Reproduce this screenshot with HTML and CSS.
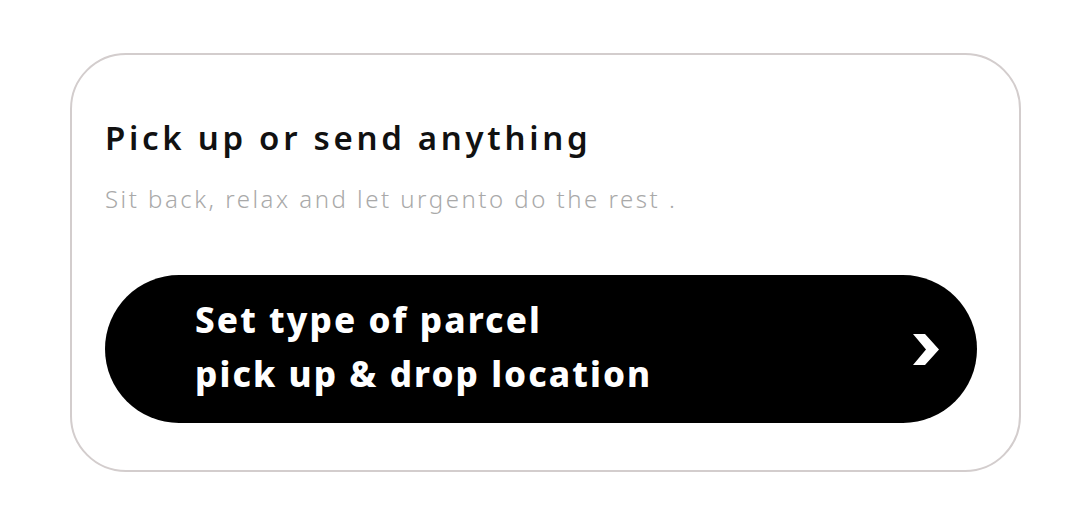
FILE: index.html
```html
<!DOCTYPE html>
<html>
<head>
<meta charset="utf-8">
<link rel="stylesheet" href="styles.css">
</head>
<body>
<div class="card">
  <h1 class="title">Pick up or send anything</h1>
  <p class="subtitle">Sit back, relax and let urgento do the rest .</p>
  <button class="cta">
    <span class="cta-text">Set type of parcel<br>pick up &amp; drop location</span>
    <svg class="chev" width="28" height="32" viewBox="0 0 28 32"><path d="M1 1 L13 1 L27 16.5 L13 32 L1 32 L14 16.5 Z" fill="#fff"/></svg>
  </button>
</div>
</body>
</html>
```
FILE: styles.css
```css
html, body { margin: 0; padding: 0; background: #fff; }
body { width: 1080px; height: 520px; font-family: "Noto Sans", "DejaVu Sans", sans-serif; }
.card {
  box-sizing: border-box;
  margin: 53px 0 0 70px;
  width: 951px;
  height: 419px;
  border: 2px solid #d3cdcd;
  border-radius: 56px;
  padding: 61px 42px 0 33px;
  display: flex;
  flex-direction: column;
}
.title {
  margin: 0;
  font-size: 33px;
  font-weight: 600;
  line-height: 44px;
  letter-spacing: 3.7px;
  font-stretch: 125%;
  color: #111;
}
.subtitle {
  margin: 24px 0 0 0;
  font-size: 24px;
  font-weight: 300;
  line-height: 30px;
  letter-spacing: 2.5px;
  color: #a9a9a9;
}
.cta {
  margin-top: 61px;
  height: 148px;
  border: none;
  border-radius: 74px;
  background: #000;
  display: flex;
  align-items: center;
  justify-content: space-between;
  padding: 0 37px 4px 90px;
  font-family: inherit;
  text-align: left;
}
.cta-text {
  color: #fff;
  font-size: 35px;
  font-weight: 800;
  line-height: 54px;
  letter-spacing: 2.1px;
}
.chev { display: block; margin-top: 4px; }
```
